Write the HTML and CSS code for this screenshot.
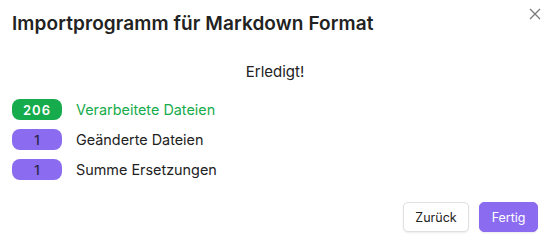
FILE: index.html
```html
<!DOCTYPE html>
<html lang="de">
<head>
    <meta charset="UTF-8">
    <meta name="viewport" content="width=device-width, initial-scale=1.0">
    <title>Importprogramm für Markdown Format</title>
    <link rel="stylesheet" href="styles.css">
</head>
<body>
    <div class="modal">
        <button class="modal-close" aria-label="Schließen">
            <svg width="12" height="12" viewBox="0 0 12 12">
                <path d="M1 1L11 11M11 1L1 11" stroke="#7a7a7a" stroke-width="1.3" fill="none"/>
            </svg>
        </button>
        <h2 class="modal-title">Importprogramm für Markdown Format</h2>
        <div class="modal-content">
            <p class="status">Erledigt!</p>
            <ul class="stats">
                <li class="stat success">
                    <span class="badge">206</span>
                    <span class="stat-label">Verarbeitete Dateien</span>
                </li>
                <li class="stat">
                    <span class="badge">1</span>
                    <span class="stat-label">Geänderte Dateien</span>
                </li>
                <li class="stat">
                    <span class="badge">1</span>
                    <span class="stat-label">Summe Ersetzungen</span>
                </li>
            </ul>
        </div>
        <div class="modal-buttons">
            <button class="btn">Zurück</button>
            <button class="btn mod-cta">Fertig</button>
        </div>
    </div>
</body>
</html>
```

FILE: styles.css
```css
:root {
    --accent: #8b6cf0;
    --success: #16ab4c;
    --text-normal: #222222;
    --border: #e0e0e0;
}

body {
    margin: 0;
    font-family: 'Inter', 'Noto Sans', sans-serif;
    background: #ffffff;
    color: var(--text-normal);
}

.modal {
    position: relative;
    width: 552px;
    height: 244px;
    box-sizing: border-box;
    padding: 12px 14px 12px 12px;
    display: flex;
    flex-direction: column;
}

.modal-close {
    position: absolute;
    top: 8px;
    right: 11px;
    width: 12px;
    height: 12px;
    padding: 0;
    border: none;
    background: none;
    display: flex;
}

.modal-title {
    margin: 0;
    font-size: 19px;
    font-weight: 600;
    line-height: 24px;
    letter-spacing: 0.1px;
}

.modal-content {
    flex-grow: 1;
}

.status {
    margin: 26px 0 0;
    text-align: center;
    font-size: 15px;
    line-height: 20px;
}

.stats {
    list-style: none;
    margin: 17px 0 0;
    padding: 0;
    display: flex;
    flex-direction: column;
    gap: 9px;
}

.stat {
    display: flex;
    align-items: center;
    gap: 14px;
    font-size: 14.4px;
}

.badge {
    width: 50px;
    height: 21px;
    border-radius: 8px;
    background: var(--accent);
    color: #2a2440;
    font-size: 13px;
    font-weight: 500;
    display: flex;
    justify-content: center;
    align-items: center;
}

.stat.success .badge {
    background: var(--success);
    color: #ffffff;
    font-weight: 600;
    letter-spacing: 1px;
}

.stat.success .stat-label {
    color: var(--success);
}

.modal-buttons {
    display: flex;
    justify-content: flex-end;
    gap: 10px;
}

.btn {
    height: 30px;
    padding: 0 11.5px;
    border-radius: 5px;
    border: 1px solid var(--border);
    background: #ffffff;
    color: var(--text-normal);
    font-family: inherit;
    font-size: 12.5px;
    box-shadow: 0 1px 2px rgba(0, 0, 0, 0.08);
}

.btn.mod-cta {
    background: var(--accent);
    border-color: var(--accent);
    color: #ffffff;
}
```
